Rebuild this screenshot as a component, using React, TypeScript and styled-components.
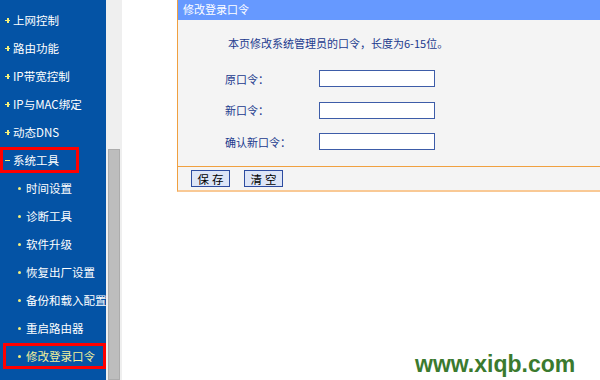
import React from "react";
import styled, { createGlobalStyle } from "styled-components";

const Global = createGlobalStyle`
  html, body { margin: 0; padding: 0; background: #ffffff; }
  body { width: 600px; height: 380px; overflow: hidden; font-family: "Noto Sans CJK SC", "Liberation Sans", sans-serif; }
`;

const Page = styled.div`
  position: relative;
  display: flex;
  width: 600px;
  height: 380px;
  overflow: hidden;
`;

const Sidebar = styled.nav`
  width: 106px;
  flex: none;
  background: #0453a5;
  padding-top: 6px;
  box-sizing: border-box;
  display: flex;
  flex-direction: column;
`;

const Row = styled.div`
  height: 28px;
  display: flex;
  align-items: center;
`;

const Mark = styled.div<{ $sub?: boolean; $hl?: boolean }>`
  box-sizing: border-box;
  height: 26px;
  width: ${(p) => (p.$sub ? "103px" : "79px")};
  margin-left: ${(p) => (p.$sub ? "3px" : "0")};
  border: 3px solid ${(p) => (p.$hl ? "#ff0000" : "transparent")};
  display: flex;
  align-items: center;
  padding-left: ${(p) => (p.$sub ? "12px" : "2px")};
  white-space: nowrap;
`;

const Bullet = styled.span<{ $kind: "plus" | "minus" | "dot" }>`
  position: relative;
  flex: none;
  width: ${(p) => (p.$kind === "dot" ? "3px" : "5px")};
  height: ${(p) => (p.$kind === "dot" ? "3px" : "5px")};
  margin-right: ${(p) => (p.$kind === "dot" ? "5px" : "3px")};
  border-radius: ${(p) => (p.$kind === "dot" ? "50%" : "0")};
  background: ${(p) => (p.$kind === "dot" ? "#f4f07a" : "transparent")};
  &::before {
    content: "";
    display: ${(p) => (p.$kind === "dot" ? "none" : "block")};
    position: absolute;
    left: 0;
    top: 2px;
    width: 5px;
    height: 1.5px;
    background: #f4f07a;
  }
  &::after {
    content: "";
    display: ${(p) => (p.$kind === "plus" ? "block" : "none")};
    position: absolute;
    left: 2px;
    top: 0;
    width: 1.5px;
    height: 5px;
    background: #f4f07a;
  }
`;

const ItemText = styled.span<{ $active?: boolean }>`
  font-size: 11.5px;
  line-height: 14px;
  color: ${(p) => (p.$active ? "#f3f19a" : "#ffffff")};
`;

const ScrollTrack = styled.div`
  width: 16px;
  flex: none;
  background: #efefef;
  display: flex;
  flex-direction: column;
  align-items: center;
  padding-top: 149px;
  box-sizing: border-box;
`;

const ScrollThumb = styled.div`
  width: 12px;
  flex: 1;
  box-sizing: border-box;
  background: #bdbdbd;
  border: 1px solid #acacac;
`;

const Content = styled.main`
  flex: 1;
  padding-left: 55px;
  min-width: 0;
`;

const Panel = styled.section`
  width: 440px;
  border-left: 1px solid #f0a040;
  background: #f4f4f4;
  border-bottom: 2px solid #f9c995;
`;

const PanelHeader = styled.div`
  height: 20px;
  background: #6699ff;
  color: #ffffff;
  font-size: 11px;
  line-height: 18px;
  padding-left: 5px;
`;

const PanelBody = styled.div`
  height: 147px;
  box-sizing: border-box;
  padding: 15px 0 0 47px;
  border-bottom: 1px solid #f0a040;
`;

const Intro = styled.p`
  margin: 0 0 12px 3px;
  font-size: 11px;
  line-height: 16px;
  color: #1b3a8e;
`;

const Form = styled.div`
  display: grid;
  grid-template-columns: 94px 116px;
  grid-auto-rows: 31.5px;
  align-items: center;
`;

const Label = styled.label`
  font-size: 11px;
  color: #1b3a8e;
`;

const Input = styled.input`
  box-sizing: border-box;
  width: 116px;
  height: 17px;
  border: 1px solid #3d5ca8;
  background: #ffffff;
  padding: 0;
  margin: 0;
`;

const Footer = styled.div`
  height: 23px;
  box-sizing: border-box;
  padding: 3px 0 0 13px;
  display: flex;
  gap: 14px;
`;

const Button = styled.button`
  box-sizing: border-box;
  width: 39px;
  height: 17px;
  padding: 0;
  border: 1px solid #2c4ba0;
  background: #dde5f7;
  color: #000000;
  font-family: "Noto Sans CJK SC", sans-serif;
  font-size: 11.5px;
  line-height: 14px;
  letter-spacing: 3px;
  text-indent: 3px;
`;

const Watermark = styled.div`
  position: absolute;
  left: 415px;
  top: 349px;
  font-family: "Liberation Sans", Arial, sans-serif;
  font-weight: bold;
  font-size: 23px;
  line-height: 30px;
  color: #3b7a2e;
`;

type Item = { text: string; sub?: boolean; kind: "plus" | "minus" | "dot"; hl?: boolean; active?: boolean };

const items: Item[] = [
  { text: "上网控制", kind: "plus" },
  { text: "路由功能", kind: "plus" },
  { text: "IP带宽控制", kind: "plus" },
  { text: "IP与MAC绑定", kind: "plus" },
  { text: "动态DNS", kind: "plus" },
  { text: "系统工具", kind: "minus", hl: true },
  { text: "时间设置", sub: true, kind: "dot" },
  { text: "诊断工具", sub: true, kind: "dot" },
  { text: "软件升级", sub: true, kind: "dot" },
  { text: "恢复出厂设置", sub: true, kind: "dot" },
  { text: "备份和载入配置", sub: true, kind: "dot" },
  { text: "重启路由器", sub: true, kind: "dot" },
  { text: "修改登录口令", sub: true, kind: "dot", hl: true, active: true },
];

export default function App() {
  return (
    <Page>
      <Global />
      <Sidebar>
        {items.map((it) => (
          <Row key={it.text}>
            <Mark $sub={it.sub} $hl={it.hl}>
              <Bullet $kind={it.kind} />
              <ItemText $active={it.active}>{it.text}</ItemText>
            </Mark>
          </Row>
        ))}
      </Sidebar>
      <ScrollTrack>
        <ScrollThumb />
      </ScrollTrack>
      <Content>
        <Panel>
          <PanelHeader>修改登录口令</PanelHeader>
          <PanelBody>
            <Intro>本页修改系统管理员的口令，长度为6-15位。</Intro>
            <Form>
              <Label>原口令：</Label>
              <Input type="password" />
              <Label>新口令：</Label>
              <Input type="password" />
              <Label>确认新口令：</Label>
              <Input type="password" />
            </Form>
          </PanelBody>
          <Footer>
            <Button>保存</Button>
            <Button>清空</Button>
          </Footer>
        </Panel>
      </Content>
      <Watermark>www.xiqb.com</Watermark>
    </Page>
  );
}
